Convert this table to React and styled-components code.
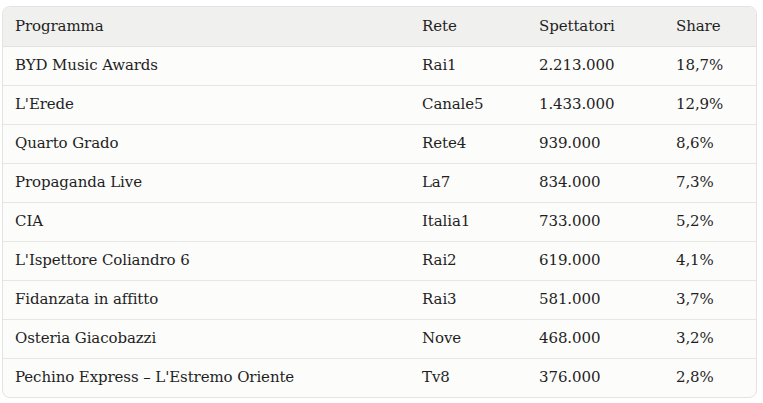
import React from "react";
import styled, { createGlobalStyle } from "styled-components";

const GlobalStyle = createGlobalStyle`
  *, *::before, *::after {
    box-sizing: border-box;
  }
  html, body {
    margin: 0;
    padding: 0;
    background: #ffffff;
  }
  body {
    font-family: "DejaVu Serif", "Liberation Serif", serif;
    color: #1f1f1f;
  }
`;

const Page = styled.div`
  padding: 6px 7px 0 2px;
`;

const Frame = styled.div`
  width: 755px;
  border: 1px solid #e3e3e1;
  border-radius: 8px;
  overflow: hidden;
  background: #fcfcfb;
`;

const Table = styled.table`
  width: 100%;
  border-collapse: collapse;
  table-layout: fixed;
  font-size: 15px;
  letter-spacing: -0.1px;
`;

const HeadCell = styled.th`
  width: ${(p) => p.$w}px;
  height: 39px;
  padding: 0 12px 1px;
  text-align: left;
  font-weight: 400;
  background: #f0f0ee;
  border-bottom: 1px solid #e3e3e1;
`;

const Cell = styled.td`
  height: 39px;
  padding: 0 12px 1px;
  white-space: nowrap;
  border-bottom: ${(p) => (p.$last ? "none" : "1px solid #e6e6e4")};
`;

const columns = [
  { label: "Programma", w: 407 },
  { label: "Rete", w: 117 },
  { label: "Spettatori", w: 137 },
  { label: "Share", w: 92 },
];

const rows = [
  ["BYD Music Awards", "Rai1", "2.213.000", "18,7%"],
  ["L'Erede", "Canale5", "1.433.000", "12,9%"],
  ["Quarto Grado", "Rete4", "939.000", "8,6%"],
  ["Propaganda Live", "La7", "834.000", "7,3%"],
  ["CIA", "Italia1", "733.000", "5,2%"],
  ["L'Ispettore Coliandro 6", "Rai2", "619.000", "4,1%"],
  ["Fidanzata in affitto", "Rai3", "581.000", "3,7%"],
  ["Osteria Giacobazzi", "Nove", "468.000", "3,2%"],
  ["Pechino Express – L'Estremo Oriente", "Tv8", "376.000", "2,8%"],
];

export default function App() {
  return (
    <>
      <GlobalStyle />
      <Page>
        <Frame>
          <Table>
            <thead>
              <tr>
                {columns.map((c) => (
                  <HeadCell key={c.label} $w={c.w}>
                    {c.label}
                  </HeadCell>
                ))}
              </tr>
            </thead>
            <tbody>
              {rows.map((r, i) => (
                <tr key={r[0]}>
                  {r.map((v, j) => (
                    <Cell key={j} $last={i === rows.length - 1}>
                      {v}
                    </Cell>
                  ))}
                </tr>
              ))}
            </tbody>
          </Table>
        </Frame>
      </Page>
    </>
  );
}
